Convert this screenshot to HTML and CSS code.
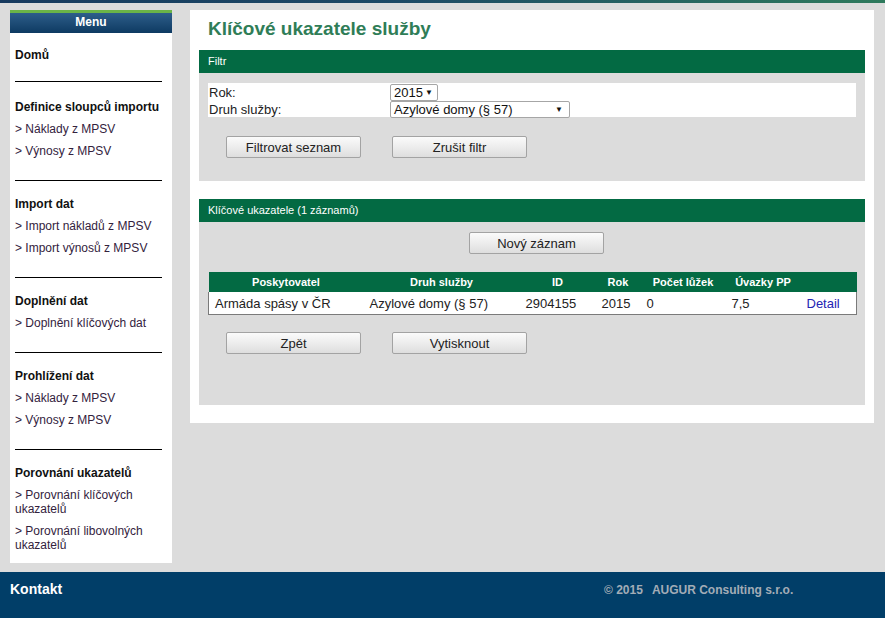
FILE: index.html
```html
<!DOCTYPE html>
<html lang="cs">
<head>
<meta charset="utf-8">
<title>Klíčové ukazatele služby</title>
<link rel="stylesheet" href="styles.css">
</head>
<body>
<div class="topline"></div>
<div class="layout">
  <nav class="sidebar">
    <div class="menu-head">Menu</div>
    <div class="menu-body">
      <div class="m-head">Domů</div>
      <div class="m-sep m-sep-first"></div>
      <div class="m-head">Definice sloupců importu</div>
      <a class="m-link" href="#">&gt; Náklady z MPSV</a>
      <a class="m-link" href="#">&gt; Výnosy z MPSV</a>
      <div class="m-sep"></div>
      <div class="m-head">Import dat</div>
      <a class="m-link" href="#">&gt; Import nákladů z MPSV</a>
      <a class="m-link" href="#">&gt; Import výnosů z MPSV</a>
      <div class="m-sep"></div>
      <div class="m-head">Doplnění dat</div>
      <a class="m-link" href="#">&gt; Doplnění klíčových dat</a>
      <div class="m-sep"></div>
      <div class="m-head">Prohlížení dat</div>
      <a class="m-link" href="#">&gt; Náklady z MPSV</a>
      <a class="m-link" href="#">&gt; Výnosy z MPSV</a>
      <div class="m-sep"></div>
      <div class="m-head">Porovnání ukazatelů</div>
      <a class="m-link" href="#">&gt; Porovnání klíčových ukazatelů</a>
      <a class="m-link" href="#">&gt; Porovnání libovolných ukazatelů</a>
    </div>
  </nav>
  <main class="main">
    <h1 class="title">Klíčové ukazatele služby</h1>
    <section class="box">
      <div class="box-head">Filtr</div>
      <div class="box-body filter-body">
        <div class="filter-form">
          <div class="f-row">
            <span class="f-label">Rok:</span>
            <span class="sel sel-year">2015<span class="arrow">▼</span></span>
          </div>
          <div class="f-row">
            <span class="f-label">Druh služby:</span>
            <span class="sel sel-type">Azylové domy (§ 57)<span class="arrow">▼</span></span>
          </div>
        </div>
        <div class="btn-row">
          <button class="btn">Filtrovat seznam</button>
          <button class="btn">Zrušit filtr</button>
        </div>
      </div>
    </section>
    <section class="box box2">
      <div class="box-head">Klíčové ukazatele (1 záznamů)</div>
      <div class="box-body list-body">
        <div class="new-row"><button class="btn">Nový záznam</button></div>
        <table class="grid">
          <colgroup>
            <col class="c1"><col class="c2"><col class="c3"><col class="c4"><col class="c5"><col class="c6"><col class="c7">
          </colgroup>
          <thead>
            <tr><th>Poskytovatel</th><th>Druh služby</th><th>ID</th><th>Rok</th><th>Počet lůžek</th><th>Úvazky PP</th><th></th></tr>
          </thead>
          <tbody>
            <tr><td>Armáda spásy v ČR</td><td>Azylové domy (§ 57)</td><td>2904155</td><td>2015</td><td>0</td><td>7,5</td><td><a class="detail" href="#">Detail</a></td></tr>
          </tbody>
        </table>
        <div class="btn-row btn-row2">
          <button class="btn">Zpět</button>
          <button class="btn">Vytisknout</button>
        </div>
      </div>
    </section>
  </main>
</div>
<footer class="footer">
  <span class="contact">Kontakt</span>
  <span class="copy"><span>© 2015</span><span>AUGUR Consulting s.r.o.</span></span>
</footer>
</body>
</html>
```

FILE: styles.css
```css
html, body {
  margin: 0;
  padding: 0;
}
body {
  background: #dcdcdc;
  font-family: "Liberation Sans", Arial, sans-serif;
  color: #111;
  width: 885px;
  height: 618px;
  overflow: hidden;
}
.topline {
  height: 3px;
  background: linear-gradient(to right, #173a5e 0%, #1d4a66 45%, #2e7a5c 100%);
}
.layout {
  display: flex;
  align-items: flex-start;
  padding: 7px 11px 0 10px;
  gap: 18px;
}
.sidebar {
  width: 162px;
  flex: none;
  background: #fff;
}
.menu-head {
  border-top: 3px solid #6bb548;
  height: 20px;
  line-height: 19px;
  background: linear-gradient(#2d5e8a, #0e3a62);
  color: #fff;
  font-size: 12px;
  font-weight: bold;
  text-align: center;
}
.menu-body {
  padding: 15px 10px 3px 5px;
  font-size: 12px;
}
.m-head {
  font-weight: bold;
  line-height: 14px;
  margin-bottom: 8px;
  color: #111;
}
.m-link {
  display: block;
  line-height: 14px;
  margin-bottom: 8px;
  color: #33223d;
  text-decoration: none;
}
.m-sep {
  border-top: 1px solid #000;
  margin: 22px 0 16px;
}
.m-sep-first {
  margin: 19px 0 18px;
}
.main {
  width: 666px;
  flex: none;
  background: #fff;
  padding: 0 9px 18px;
  height: 395px;
}
.title {
  margin: 7px 0 10px 9px;
  font-size: 19px;
  line-height: 23px;
  font-weight: bold;
  color: #2f7d57;
}
.box-head {
  background: #036a43;
  color: #fff;
  font-size: 11px;
  height: 23px;
  line-height: 23px;
  padding-left: 9px;
}
.box-body {
  background: #dcdcdc;
  padding: 10px 9px 0;
}
.filter-body {
  height: 98px;
}
.filter-form {
  background: #fff;
  padding: 1px 1px 0;
  height: 33px;
}
.f-row {
  display: flex;
  align-items: center;
  height: 17px;
  font-size: 13px;
}
.f-label {
  width: 181px;
  color: #222;
}
.sel {
  position: relative;
  box-sizing: border-box;
  height: 17px;
  border: 1px solid #a6a6a6;
  border-radius: 2px;
  line-height: 15px;
  padding-left: 3px;
  font-size: 13px;
  color: #111;
  background: #fff;
}
.sel-year { width: 48px; }
.sel-type { width: 180px; }
.arrow {
  position: absolute;
  right: 4px;
  top: 0;
  font-size: 8px;
  line-height: 15px;
}
.sel-type .arrow { right: 6px; }
.btn-row {
  display: flex;
  gap: 31px;
  padding-left: 18px;
  margin-top: 19px;
}
.btn {
  width: 135px;
  height: 22px;
  padding: 0;
  border: 1px solid #a3a3a3;
  border-radius: 2px;
  background: linear-gradient(#fbfbfb, #dedede);
  font-family: "Liberation Sans", Arial, sans-serif;
  font-size: 13px;
  color: #222;
}
.box2 {
  margin-top: 18px;
}
.list-body {
  height: 173px;
}
.new-row {
  display: flex;
  justify-content: center;
  padding-left: 9px;
}
.grid {
  margin-top: 18px;
  width: 648px;
  table-layout: fixed;
  border-collapse: collapse;
  font-size: 13px;
}
.c1 { width: 155px; }
.c2 { width: 156px; }
.c3 { width: 76px; }
.c4 { width: 45px; }
.c5 { width: 85px; }
.c6 { width: 75px; }
.c7 { width: 56px; }
.grid th {
  background: #036a43;
  color: #fff;
  font-size: 11px;
  font-weight: bold;
  height: 20px;
  padding: 0 6px;
  text-align: center;
}
.grid tbody tr {
  border: 1px solid #7a7a7a;
  border-top: none;
}
.grid td {
  background: #fff;
  height: 22px;
  padding: 0 6px;
  color: #222;
  white-space: nowrap;
}
.detail {
  color: #2424b4;
  text-decoration: none;
}
.btn-row2 {
  margin-top: 17px;
}
.footer {
  margin-top: 9px;
  height: 46px;
  box-sizing: border-box;
  background: #013e68;
  display: flex;
  align-items: flex-start;
  padding: 9px 0 0 10px;
}
.contact {
  color: #fff;
  font-weight: bold;
  font-size: 14px;
  line-height: 16px;
  width: 594px;
}
.copy {
  display: flex;
  gap: 9px;
  color: #a3acb6;
  font-weight: bold;
  font-size: 12px;
  line-height: 16px;
  padding-top: 1px;
}
```
